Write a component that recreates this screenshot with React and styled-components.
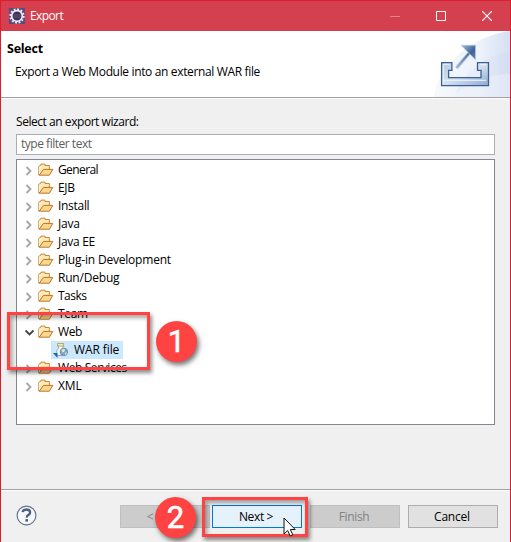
import React from 'react';
import styled, { createGlobalStyle, css } from 'styled-components';

const Global = createGlobalStyle`
  * { box-sizing: border-box; }
  body { margin: 0; overflow: hidden; }
`;

const Dialog = styled.main`
  position: relative;
  display: flex;
  flex-direction: column;
  width: 511px;
  height: 542px;
  border: 1px solid #e01b2f;
  border-bottom: 0;
  background: #f0f0f0;
  color: #000;
  font: 12px/18px "Open Sans", "Noto Sans", sans-serif;
  overflow: hidden;
`;

const Label = styled.span`
  display: inline-block;
  white-space: pre;
  letter-spacing: ${(p) => p.$track ?? -0.35}px;
`;

const TitleBar = styled.header`
  display: flex;
  align-items: center;
  height: 30px;
  flex: none;
  padding-left: 8px;
  background: #d4404d;
  color: #fff;
`;

const TitleText = styled(Label)`
  flex: 1;
  margin: 0 0 0 5px;
`;

const WindowControl = styled.div`
  display: flex;
  align-items: center;
  justify-content: center;
  width: 46px;
  height: 30px;
  opacity: ${(p) => (p.$disabled ? 0.35 : 1)};
`;

const Banner = styled.section`
  display: flex;
  justify-content: space-between;
  flex: none;
  height: 68px;
  background: #fff;
  border-bottom: 1px solid #fff;
  box-shadow: inset 0 -1px #a0a0a0;
`;

const BannerText = styled.div`
  padding: 9px 0 0 6px;
`;

const Heading = styled.h1`
  margin: 0;
  font-size: 12.5px;
  line-height: 18px;
  letter-spacing: -0.25px;
`;

const Description = styled.p`
  margin: 5px 0 0 8px;
`;

const Content = styled.section`
  display: flex;
  flex-direction: column;
  flex: none;
  height: 390px;
  padding: 14px 15px 0;
`;

const FilterInput = styled.div`
  height: 21px;
  margin-top: 3px;
  padding: 0 4px;
  border: 1px solid #abadb3;
  background: #fff;
  color: #5d5d5d;
`;

const Tree = styled.ul`
  list-style: none;
  height: 266px;
  margin: 4px 0 0;
  padding: 1px 0 0 8px;
  border: 1px solid #828790;
  background: #fff;
`;

const TreeRow = styled.li`
  display: flex;
  align-items: center;
  height: 18px;
  padding-left: ${(p) => (p.$child ? 26 : 0)}px;
  svg { flex: none; }
`;

const Disclosure = styled.svg`
  margin: 2px 4px 0 0;
`;

const RowLabel = styled(Label)`
  margin-left: ${(p) => (p.$child ? 5 : 4)}px;
`;

const Selection = styled.div`
  display: flex;
  align-items: center;
  width: 72px;
  height: 18px;
  padding-left: 2px;
  background: #cce8ff;
`;

const Footer = styled.footer`
  display: flex;
  align-items: flex-start;
  flex: 1;
  border-top: 1px solid #a0a0a0;
  box-shadow: inset 0 1px #fff;
  padding: 15px 12px 0 15px;
`;

const ButtonGroup = styled.div`
  display: flex;
  margin-left: auto;
`;

const Button = styled.button`
  width: 90px;
  height: 23px;
  margin: 0 0 0 ${(p) => p.$gap ?? 0}px;
  padding: 1px 2px 0 0;
  border: 1px solid #adadad;
  background: #e1e1e1;
  color: #000;
  font: inherit;
  ${(p) => p.$disabled && css`border-color: #bfbfbf; background: #ccc; color: #838383;`}
  ${(p) => p.$focused && css`border-color: #0078d7; background: #e5f1fb;`}
`;

const Highlight = styled.div`
  position: absolute;
  left: ${(p) => p.$x}px;
  top: ${(p) => p.$y}px;
  width: ${(p) => p.$w}px;
  height: ${(p) => p.$h}px;
  border: 3px solid #ff4343;
  box-shadow: 2px 3px 4px rgba(0,0,0,.45), inset 2px 3px 4px rgba(0,0,0,.35);
`;

const Badge = styled.div`
  position: absolute;
  left: ${(p) => p.$x}px;
  top: ${(p) => p.$y}px;
  width: 41px;
  height: 41px;
  border-radius: 50%;
  background: #ff4343;
  color: #fff;
  font: 31px/41px Roboto, sans-serif;
  -webkit-text-stroke: .6px #fff;
  text-align: center;
  box-shadow: 2px 3px 5px rgba(0,0,0,.55);
`;

const Pointer = styled.svg`
  position: absolute;
  left: 282px;
  top: 516px;
`;

const AppIcon = () => (
  <svg width="16" height="16" viewBox="0 0 16 16">
    <rect width="16" height="16" fill="#5b4a82" />
    <circle cx="8" cy="8" r="6.7" fill="none" stroke="#f3f1f5" strokeWidth="1.9" strokeDasharray="1.8 1.71" />
    <circle cx="8" cy="8" r="5.3" fill="#3c3058" stroke="#f1eff3" strokeWidth="1.7" />
    <path d="M4.2 7h7.6M4.2 9h7.6" stroke="#5e5478" />
  </svg>
);

const ExportArt = () => (
  <svg width="76" height="66" viewBox="0 0 76 66">
    <defs>
      <linearGradient id="wash" x1="0" x2="1"><stop stopColor="#f6f8fd" /><stop offset=".6" stopColor="#edf2fb" /><stop offset="1" stopColor="#d6e0f3" /></linearGradient>
      <linearGradient id="tray" x1="0" x2="1" y2="1"><stop stopColor="#b8cae2" /><stop offset=".5" stopColor="#d5e0ee" /><stop offset="1" stopColor="#8ca9ce" /></linearGradient>
      <linearGradient id="shaft" x1="0" y1="1" x2="1" y2="0"><stop stopColor="#9fb5d4" /><stop offset="1" stopColor="#46699e" /></linearGradient>
      <linearGradient id="head" x1="0" x2="1" y2="1"><stop stopColor="#a7bddb" /><stop offset=".6" stopColor="#3f6299" /><stop offset="1" stopColor="#6986b3" /></linearGradient>
    </defs>
    <path d="M0 66C3 37 36 5 76 0v66Z" fill="url(#wash)" />
    <path d="M20 66C30 40 50 26 76 20v46Z" fill="#cbd8f0" opacity=".22" />
    <path d="M15 66C40 51 56 43 76 43v23Z" fill="#fff" opacity=".25" />
    <path d="M7.6 31.6h10.3v7.8h-3.3v7.2H47v-7.2h-3.5v-7.8h11v23h-46.9Z" fill="url(#tray)" stroke="#3b6097" strokeWidth="1.3" />
    <path d="M9.3 53V33.3h6.5M9.3 49.3H52M45.5 33.3h7" fill="none" stroke="#eff4fa" />
    <path d="m22.5 37 13.2-15.5" stroke="#cbd8e9" strokeWidth="4" />
    <path d="m22.5 37 14-16.5" stroke="url(#shaft)" strokeWidth="2.2" />
    <path d="M27 14.3h14.5v14.5Z" fill="url(#head)" stroke="#b3c5dd" strokeWidth=".7" />
  </svg>
);

const FolderIcon = () => (
  <svg width="16" height="14" viewBox="0 0 16 14">
    <path d="M.8 12V3.5L2 2.2h1V1.1h4v1.4h4.4v4H6.2L1.6 12Z" fill="#ffe9b0" stroke="#c5893f" />
    <path d="M1.2 12.2 5.5 6.4h9.3l-3.4 5.8Z" fill="#fad78d" stroke="#b9772f" />
    <path d="M1.5 11V4.2h2V2.5" fill="none" stroke="#fff4ce" />
  </svg>
);

const WarIcon = () => (
  <svg width="16" height="16" viewBox="0 0 16 16">
    <path d="M5.5 4v2.4Q3.8 7 3.8 9v4.5h7V7.5L10 6V4" fill="#f5f8fa" stroke="#9badba" />
    <rect x="4.6" y="1.6" width="6" height="2.4" fill="#fff1bd" stroke="#b6a566" />
    <circle cx="10.9" cy="9.9" r="3.7" fill="#79a9cd" stroke="#7189b4" />
    <path d="m8.5 8 2-1.2 1.5.7-.5 2-2 1Zm3.4 3 1.7-1v2l-1.3 1Z" fill="#e1eabd" />
    <path d="M0 11h4.5v5Z" fill="#1b679f" />
  </svg>
);

const HelpIcon = () => (
  <svg width="21" height="21" viewBox="0 0 21 21">
    <circle cx="10.5" cy="10.5" r="9.4" fill="#f5f7f9" stroke="#64758c" strokeWidth="1.2" />
    <path d="M6.6 7.1Q7.1 4.5 10.4 4.5q3.7 0 3.7 2.9 0 1.6-1.8 2.6-1.7.9-1.5 2.6" fill="none" stroke="#4b617e" strokeWidth="2.3" />
    <path d="M9.4 14.1h2.6v2.5H9.4Z" fill="#4b617e" />
  </svg>
);

const Arrow = ({ open }) => (
  <Disclosure width="9" height="10" viewBox="0 0 9 10">
    <path d={open ? 'M.5 2.5 4.5 6.5 8.5 2.5' : 'M1.5 1 5.5 5 1.5 9'} fill="none" stroke={open ? '#404040' : '#a6a6a6'} strokeWidth="1.8" />
  </Disclosure>
);

const folders = [
  { name: 'General', track: -0.6 },
  { name: 'EJB', track: -0.3 },
  { name: 'Install', track: -0.3 },
  { name: 'Java', track: -0.2 },
  { name: 'Java EE', track: -0.3 },
  { name: 'Plug-in Development', track: -0.2 },
  { name: 'Run/Debug', track: -0.2 },
  { name: 'Tasks', track: -0.5 },
  { name: 'Team', track: -0.35 },
  { name: 'Web', track: -0.35, open: true },
  { name: 'Web Services', track: -0.4 },
  { name: 'XML', track: -0.1 },
];

export default function App() {
  return (
    <>
      <Global />
      <Dialog>
        <TitleBar>
          <AppIcon /><TitleText $track={-0.6}>Export</TitleText>
          <WindowControl $disabled><svg width="10" height="10"><path d="M0 5.5h10" stroke="#fff" /></svg></WindowControl>
          <WindowControl><svg width="10" height="10"><path d="M.5.5h9v9h-9Z" fill="none" stroke="#fff" /></svg></WindowControl>
          <WindowControl><svg width="10" height="10"><path d="m0 0 10 10M10 0 0 10" stroke="#fff" strokeWidth="1.2" /></svg></WindowControl>
        </TitleBar>
        <Banner>
          <BannerText>
            <Heading>Select</Heading>
            <Description><Label>Export a Web Module into an external WAR file</Label></Description>
          </BannerText>
          <ExportArt />
        </Banner>
        <Content>
          <Label $track={-0.45}>Select an export wizard:</Label>
          <FilterInput><Label $track={-0.48}>type filter text</Label></FilterInput>
          <Tree>
            {folders.map(({ name, track, open }) => (
              <React.Fragment key={name}>
                <TreeRow><Arrow open={open} /><FolderIcon /><RowLabel $track={track}>{name}</RowLabel></TreeRow>
                {open && <TreeRow $child><Selection><WarIcon /><RowLabel $child $track={-0.1}>WAR file</RowLabel></Selection></TreeRow>}
              </React.Fragment>
            ))}
          </Tree>
        </Content>
        <Footer>
          <HelpIcon />
          <ButtonGroup>
            <Button $disabled><Label>&lt; Back</Label></Button>
            <Button $gap={2} $focused><Label>Next &gt;</Label></Button>
            <Button $gap={8} $disabled><Label>Finish</Label></Button>
            <Button $gap={8}><Label $track={-0.2}>Cancel</Label></Button>
          </ButtonGroup>
        </Footer>
        <Highlight $x={6} $y={311} $w={143} $h={58} />
        <Badge $x={155} $y={320}>1</Badge>
        <Highlight $x={201} $y={496} $w={106} $h={40} />
        <Badge $x={154} $y={496}>2</Badge>
        <Pointer width="13" height="20" viewBox="0 0 13 20"><path d="M1 1v16l3.7-3.5 2.5 5.5 2.6-1.2-2.5-5.3h4.9Z" fill="#fff" stroke="#111" /></Pointer>
      </Dialog>
    </>
  );
}
